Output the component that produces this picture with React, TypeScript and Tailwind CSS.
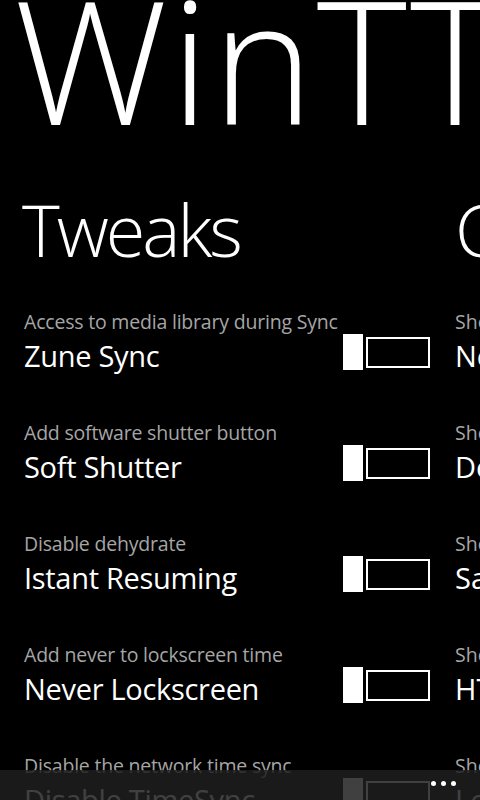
import React from "react";

const left = [
  ["Access to media library during Sync", "Zune Sync"],
  ["Add software shutter button", "Soft Shutter"],
  ["Disable dehydrate", "Istant Resuming"],
  ["Add never to lockscreen time", "Never Lockscreen"],
  ["Disable the network time sync", "Disable TimeSync"],
];

const right = [
  ["Show network name", "Network"],
  ["Show device info", "Device"],
  ["Show battery saver", "Saver"],
  ["Show HTC settings", "HTC"],
  ["Show lock settings", "Lock"],
];

function Toggle() {
  return (
    <div className="flex items-center h-[36px] w-[88px] shrink-0">
      <div className="w-[20px] h-[36px] bg-white" />
      <div className="ml-[3px] w-[64px] h-[31px] border-2 border-white" />
    </div>
  );
}

export default function App() {
  const font = { fontFamily: '"Open Sans", "Noto Sans", sans-serif' };
  return (
    <div className="relative w-[480px] h-[800px] overflow-hidden bg-black text-white" style={font}>
      <div className="h-[183px] pl-[14px] whitespace-nowrap overflow-hidden">
        <div className="text-[172px] font-light leading-none mt-[-28px] tracking-[3px]">WinTT</div>
      </div>
      <div className="flex">
        <div className="w-[455px] shrink-0 pl-[24px] pr-[24px]">
          <div className="text-[72px] font-light leading-none h-[126px] pt-[10px] tracking-[-3px] ml-[-2px]">Tweaks</div>
          {left.map(([s, t]) => (
            <div key={t} className="flex items-center justify-between h-[111px] pt-[2px]">
              <div className="self-start">
                <div className="text-[19.5px] text-[#a6a6a6] leading-[22px] tracking-[-0.2px]">{s}</div>
                <div className="text-[29px] leading-[40px] mt-[3px] tracking-[-0.3px]">{t}</div>
              </div>
              <div className="self-start mt-[23px]">
                <Toggle />
              </div>
            </div>
          ))}
        </div>
        <div className="shrink-0 whitespace-nowrap">
          <div className="text-[72px] font-light leading-none h-[126px] pt-[10px] tracking-[-3px]">Customize</div>
          {right.map(([s, t]) => (
            <div key={t} className="h-[111px] pt-[2px]">
              <div className="text-[19.5px] text-[#a6a6a6] leading-[22px]">{s}</div>
              <div className="text-[29px] leading-[40px] mt-[3px]">{t}</div>
            </div>
          ))}
        </div>
      </div>
      <div className="absolute left-0 right-0 bottom-0 h-[30px] bg-[#1f1f1f]/85 flex justify-end items-start pr-[24px] pt-[11px] gap-[5px]">
        <div className="w-[5px] h-[5px] rounded-full bg-white" />
        <div className="w-[5px] h-[5px] rounded-full bg-white" />
        <div className="w-[5px] h-[5px] rounded-full bg-white" />
      </div>
    </div>
  );
}
